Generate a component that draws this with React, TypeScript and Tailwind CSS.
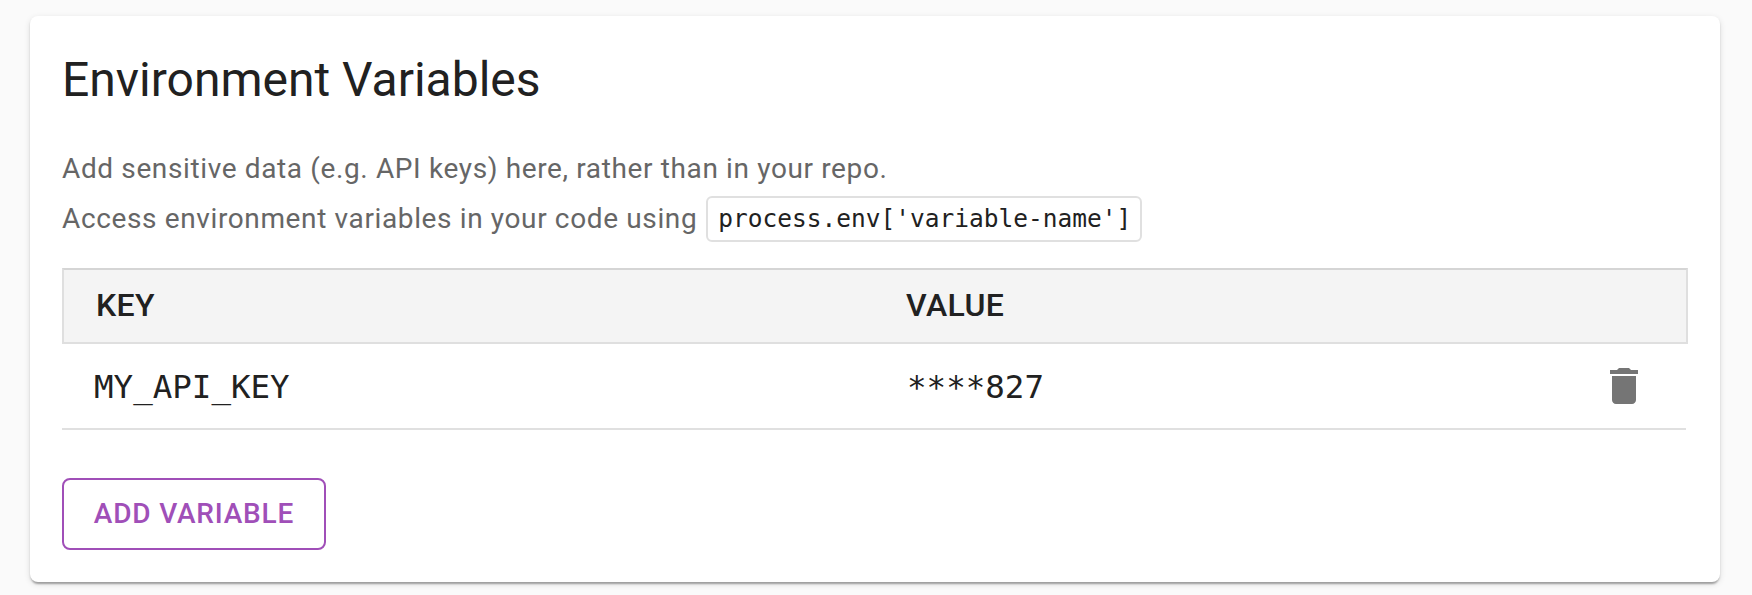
const variables = [{ key: "MY_API_KEY", value: "****827" }];

function DeleteIcon() {
  return (
    <svg viewBox="0 0 24 24" className="size-12 fill-[#757575]" aria-hidden="true">
      <path d="M6 19c0 1.1.9 2 2 2h8c1.1 0 2-.9 2-2V7H6v12zM19 4h-3.5l-1-1h-5l-1 1H5v2h14V4z" />
    </svg>
  );
}

export default function App() {
  return (
    <div className="h-[595px] bg-[#fafafa] pt-4 pr-8 pl-[30px] font-['Roboto',sans-serif] text-[#212121]">
      <section className="h-[566px] rounded-lg bg-white px-8 pt-8 shadow-[0_4px_2px_-2px_rgba(0,0,0,0.2),0_2px_2px_0_rgba(0,0,0,0.14),0_2px_6px_0_rgba(0,0,0,0.12)]">
        <h1 className="h-16 text-[48px] leading-[64px] whitespace-nowrap">Environment Variables</h1>
        <div className="mt-8 text-[28px] leading-[50px] tracking-[0.63px] whitespace-nowrap text-[#666]">
          <p>Add sensitive data (e.g. API keys) here, rather than in your repo.</p>
          <p className="flex h-[50px] items-center gap-[9px]">
            <span>Access environment variables in your code using</span>
            <code className="flex h-[46px] w-[436px] items-center justify-center rounded-md border-2 border-[#e0e0e0] pl-px font-['DejaVu_Sans_Mono',monospace] text-[24.5px] leading-none tracking-normal text-[#212121]">
              process.env['variable-name']
            </code>
          </p>
        </div>
        <div className="mt-6 text-[32px]">
          <div className="flex h-[76px] items-center border-2 border-[#dfdfdf] border-t-[#d5d5d5] bg-[#f4f4f4] pb-0.5 font-medium tracking-[0.4px]">
            <div className="w-[842px] pl-8">KEY</div>
            <div>VALUE</div>
          </div>
          {variables.map((v) => (
            <div
              key={v.key}
              className="mr-0.5 flex h-[86px] items-center border-b-2 border-[#e0e0e0] font-['DejaVu_Sans_Mono',monospace] text-[32.5px]"
            >
              <div className="w-[845px] pt-0.5 pl-8">{v.key}</div>
              <div className="flex-1 pt-0.5">{v.value}</div>
              <button className="mr-[38px]" aria-label="Delete">
                <DeleteIcon />
              </button>
            </div>
          ))}
        </div>
        <button className="mt-12 flex h-[72px] w-[264px] items-center justify-center rounded-lg border-2 border-[#a04fb8] text-[28px] font-medium tracking-[0.8px] whitespace-nowrap text-[#a04fb8]">
          ADD VARIABLE
        </button>
      </section>
    </div>
  );
}
